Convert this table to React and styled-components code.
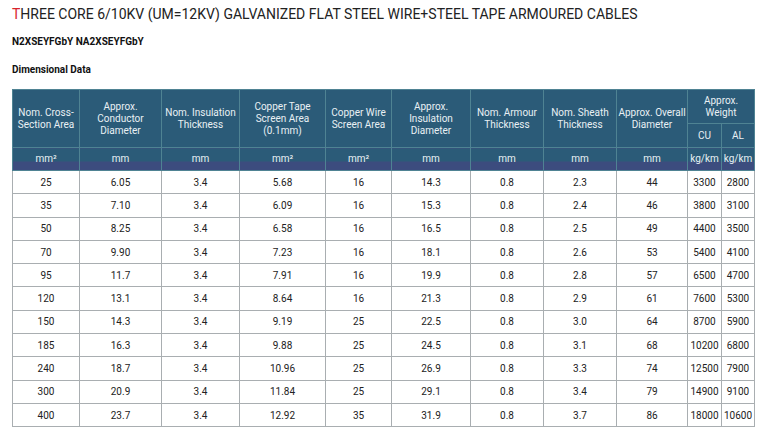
import React from "react";
import styled, { createGlobalStyle } from "styled-components";

const Global = createGlobalStyle`
  html, body { margin: 0; padding: 0; background: #fff; }
  body { font-family: Roboto, "Liberation Sans", Arial, sans-serif; color: #222; }
`;

const Page = styled.div`
  padding: 4px 14px 0 12px;
  width: 768px;
  box-sizing: border-box;
`;

const Title = styled.h1`
  margin: 0;
  font-size: 14px;
  font-weight: 400;
  line-height: 20px;
  color: #222;
`;

const Red = styled.span`
  color: #d8242c;
`;

const Sub = styled.div`
  margin-top: ${(p) => p.$mt}px;
  font-size: 10px;
  font-weight: 700;
  line-height: 12px;
  color: #111;
`;

const Table = styled.table`
  margin-top: 13px;
  border-collapse: collapse;
  table-layout: fixed;
  width: 742px;
  font-size: 10px;
`;

const Th = styled.th`
  background: #2b5b78;
  color: #e9f0f4;
  font-weight: 400;
  font-size: 10px;
  line-height: 12px;
  border: 1px solid #4f8393;
  padding: 0;
  text-align: center;
  vertical-align: middle;
  height: ${(p) => p.$h || "auto"};
`;

const UnitTh = styled(Th)`
  background: linear-gradient(#2b5b78 0, #2b5b78 58%, #3c4c7e 58%, #3c4c7e 100%);
  height: 22px;
`;

const Td = styled.td`
  border: 1px solid #a9aeb1;
  text-align: center;
  height: 22.3px;
  padding: 0;
  color: #222;
  font-size: 10px;
`;

const widths = [67, 82, 78, 86, 66, 79, 73, 73, 71, 34, 33];

const heads = [
  "Nom. Cross-Section Area",
  "Approx. Conductor Diameter",
  "Nom. Insulation Thickness",
  "Copper Tape Screen Area (0.1mm)",
  "Copper Wire Screen Area",
  "Approx. Insulation Diameter",
  "Nom. Armour Thickness",
  "Nom. Sheath Thickness",
  "Approx. Overall Diameter",
];

const units = ["mm²", "mm", "mm", "mm²", "mm²", "mm", "mm", "mm", "mm", "kg/km", "kg/km"];

const rows = [
  ["25", "6.05", "3.4", "5.68", "16", "14.3", "0.8", "2.3", "44", "3300", "2800"],
  ["35", "7.10", "3.4", "6.09", "16", "15.3", "0.8", "2.4", "46", "3800", "3100"],
  ["50", "8.25", "3.4", "6.58", "16", "16.5", "0.8", "2.5", "49", "4400", "3500"],
  ["70", "9.90", "3.4", "7.23", "16", "18.1", "0.8", "2.6", "53", "5400", "4100"],
  ["95", "11.7", "3.4", "7.91", "16", "19.9", "0.8", "2.8", "57", "6500", "4700"],
  ["120", "13.1", "3.4", "8.64", "16", "21.3", "0.8", "2.9", "61", "7600", "5300"],
  ["150", "14.3", "3.4", "9.19", "25", "22.5", "0.8", "3.0", "64", "8700", "5900"],
  ["185", "16.3", "3.4", "9.88", "25", "24.5", "0.8", "3.1", "68", "10200", "6800"],
  ["240", "18.7", "3.4", "10.96", "25", "26.9", "0.8", "3.3", "74", "12500", "7900"],
  ["300", "20.9", "3.4", "11.84", "25", "29.1", "0.8", "3.4", "79", "14900", "9100"],
  ["400", "23.7", "3.4", "12.92", "35", "31.9", "0.8", "3.7", "86", "18000", "10600"],
];

export default function App() {
  return (
    <Page>
      <Global />
      <Title>
        <Red>T</Red>HREE CORE 6/10KV (UM=12KV) GALVANIZED FLAT STEEL WIRE+STEEL TAPE ARMOURED CABLES
      </Title>
      <Sub $mt={12}>N2XSEYFGbY NA2XSEYFGbY</Sub>
      <Sub $mt={16}>Dimensional Data</Sub>
      <Table>
        <colgroup>
          {widths.map((w, i) => (
            <col key={i} style={{ width: w }} />
          ))}
        </colgroup>
        <thead>
          <tr>
            {heads.map((h) => (
              <Th key={h} rowSpan={2}>
                {h}
              </Th>
            ))}
            <Th colSpan={2} $h="33px">
              Approx.
              <br />
              Weight
            </Th>
          </tr>
          <tr>
            <Th $h="23px">CU</Th>
            <Th $h="23px">AL</Th>
          </tr>
          <tr>
            {units.map((u, i) => (
              <UnitTh key={i}>{u}</UnitTh>
            ))}
          </tr>
        </thead>
        <tbody>
          {rows.map((r) => (
            <tr key={r[0]}>
              {r.map((c, i) => (
                <Td key={i}>{c}</Td>
              ))}
            </tr>
          ))}
        </tbody>
      </Table>
    </Page>
  );
}
